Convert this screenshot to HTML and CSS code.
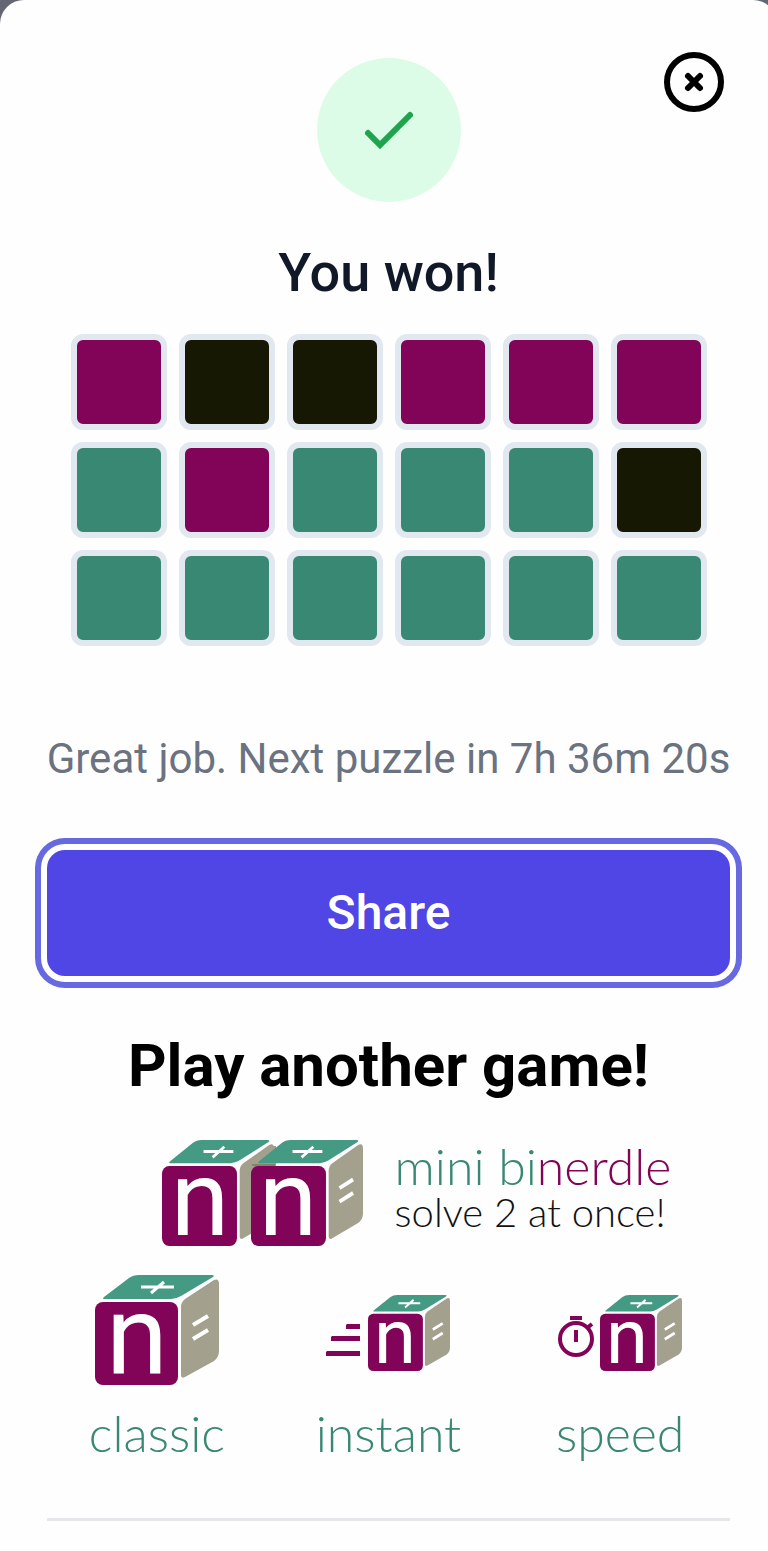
FILE: index.html
```html
<!DOCTYPE html>
<html lang="en">
<head>
<meta charset="utf-8">
<meta name="viewport" content="width=device-width, initial-scale=1">
<title>You won!</title>
<link rel="stylesheet" href="styles.css">
</head>
<body>
<svg class="defs" aria-hidden="true">
  <symbol id="block" viewBox="0 0 124 110" preserveAspectRatio="none">
    <rect class="plum" x="0" y="27" width="83" height="83" rx="8"/>
    <path class="teal" d="M9 22 34 3Q38 0 44 0H117Q120 0 118 2L86 21Q81 24 76 24H9Q7 24 9 22Z"/>
    <path class="stone" d="M86 32Q86 27 90 24L119 5Q124 3 124 9V76Q124 82 119 86L90 102Q86 104 86 100Z"/>
    <path class="mark" d="M46 12H79M56 18 69 7"/>
  </symbol>
  <symbol id="cube" viewBox="0 0 124 110" preserveAspectRatio="none">
    <use href="#block" width="124" height="110"/>
    <path class="mark bars" d="M98 50 113 41M98 64 113 55"/>
  </symbol>
</svg>
<main class="modal">
  <button class="close" type="button" aria-label="Close">
    <svg viewBox="0 0 60 60"><circle cx="30" cy="30" r="27"/><path d="M24 24 36 36M36 24 24 36"/></svg>
  </button>
  <div class="badge">
    <svg viewBox="0 0 24 24"><path d="M5 13l4 4L19 7"/></svg>
  </div>
  <h1 class="title">You won!</h1>
  <div class="board">
    <i class="cell near"></i><i class="cell miss"></i><i class="cell miss"></i><i class="cell near"></i><i class="cell near"></i><i class="cell near"></i>
    <i class="cell hit"></i><i class="cell near"></i><i class="cell hit"></i><i class="cell hit"></i><i class="cell hit"></i><i class="cell miss"></i>
    <i class="cell hit"></i><i class="cell hit"></i><i class="cell hit"></i><i class="cell hit"></i><i class="cell hit"></i><i class="cell hit"></i>
  </div>
  <p class="status">Great job. Next puzzle in 7h 36m 20s</p>
  <button class="share" type="button">Share</button>
  <h2 class="more">Play another game!</h2>
  <a class="feature" href="#binerdle">
    <svg class="feature-icon" viewBox="0 0 202 106" aria-hidden="true">
      <use href="#block" width="112" height="106"/>
      <path class="stone" d="M82 26 108 6H114V30L82 34Z"/>
      <use href="#cube" x="89" width="112" height="106"/>
      <path class="shade" d="M90 24H113V26H90Z"/>
      <text class="letter" x="38" y="95" font-size="106">n</text>
      <text class="letter" x="126" y="95" font-size="106">n</text>
    </svg>
    <span class="feature-text">
      <span class="feature-name">mini bi<span class="accent">nerdle</span></span>
      <span class="feature-note">solve 2 at once!</span>
    </span>
  </a>
  <nav class="games">
    <a class="game" href="#classic">
      <svg class="game-icon" viewBox="0 0 124 110" aria-hidden="true">
        <use href="#cube" width="124" height="110"/>
        <text class="letter" x="42" y="99" font-size="112">n</text>
      </svg>
      <span>classic</span>
    </a>
    <a class="game" href="#instant">
      <svg class="game-icon" viewBox="0 0 124 110" aria-hidden="true">
        <path class="plum" d="M21 49H34V54H20V50ZM6 61H34V66H5V62ZM1 76H34V81H0V77Z"/>
        <use href="#cube" x="42" y="20" width="82" height="76"/>
        <text class="letter" x="69" y="88" font-size="76">n</text>
      </svg>
      <span>instant</span>
    </a>
    <a class="game" href="#speed">
      <svg class="game-icon" viewBox="0 0 124 110" aria-hidden="true">
        <circle class="watch" cx="18" cy="64" r="16"/>
        <path class="watch" d="M18 55V67M12 43H24M29 53 34 49"/>
        <use href="#cube" x="42" y="20" width="82" height="76"/>
        <text class="letter" x="69" y="88" font-size="76">n</text>
      </svg>
      <span>speed</span>
    </a>
  </nav>
  <hr class="rule">
</main>
</body>
</html>
```
FILE: styles.css
```css
* { box-sizing: border-box; }
html { background: #626773; }
body { margin: 0; overflow-x: hidden; font-family: Roboto, sans-serif; }
.defs { position: absolute; width: 0; height: 0; }
.modal {
  position: relative;
  display: flex;
  flex-direction: column;
  align-items: stretch;
  min-height: 100vh;
  margin-right: -9px;
  padding: 58px 47px 30px;
  background: #fefefe;
  border-radius: 24px 24px 0 0;
}
.close {
  position: absolute;
  top: 52px;
  right: 53px;
  width: 60px;
  height: 60px;
  padding: 0;
  border: 0;
  background: none;
}
.close svg { display: block; fill: none; stroke: #000; stroke-width: 6; stroke-linecap: round; }
.badge {
  display: grid;
  place-items: center;
  align-self: center;
  width: 144px;
  height: 144px;
  border-radius: 50%;
  background: #dcfce7;
}
.badge svg { width: 72px; fill: none; stroke: #1fa34d; stroke-width: 2; stroke-linecap: round; stroke-linejoin: miter; }
.title { margin: 35px 0 25px; font-size: 54px; line-height: 72px; font-weight: 500; text-align: center; color: #111827; }
.board { display: grid; grid-template-columns: repeat(6, 96px); gap: 12px; align-self: center; }
.cell { height: 96px; border: 6px solid #e2e8f0; border-radius: 12px; }
.near { background: #820458; }
.miss { background: #161803; }
.hit { background: #398874; }
.status { margin: 83px -10px 61px; font-size: 42px; line-height: 60px; text-align: center; color: #6b7280; }
.share {
  height: 126px;
  padding: 0;
  border: 0;
  border-radius: 18px;
  background: #4f46e5;
  box-shadow: 0 0 0 6px #fff, 0 0 0 12px #6769e1;
  color: #fff;
  font: 500 48px/72px Roboto, sans-serif;
}
.more { margin: 54px 0 38px; font-size: 60px; line-height: 72px; font-weight: 700; text-align: center; color: #000; }
.feature, .game { color: #398874; text-decoration: none; font-family: Lato, sans-serif; font-weight: 300; }
.feature { display: flex; justify-content: center; gap: 31px; padding-left: 56px; }
.feature-icon { width: 202px; height: 106px; overflow: visible; }
.feature-text { display: flex; flex-direction: column; }
.feature-name { font-size: 50px; line-height: 52px; }
.feature-note { font-size: 40px; line-height: 40px; color: #111; }
.accent { color: #820458; }
.games { display: grid; grid-template-columns: repeat(3, 1fr); margin: 29px -6px 55px; }
.game { display: flex; flex-direction: column; align-items: center; gap: 18px; font-size: 50px; line-height: 60px; }
.game-icon { width: 124px; height: 110px; overflow: visible; }
.rule { width: 100%; height: 3px; margin: 0; border: 0; background: #e5e7eb; }
.plum { fill: #820458; }
.teal { fill: #459a84; }
.stone { fill: #a3a08d; }
.shade { fill: #85806f; }
.mark { fill: none; stroke: #fff; stroke-width: 3; }
.bars { stroke-width: 4; }
.watch { fill: none; stroke: #820458; stroke-width: 4; }
.letter { fill: #fff; font-family: Roboto, sans-serif; font-weight: 400; text-anchor: middle; }
```
